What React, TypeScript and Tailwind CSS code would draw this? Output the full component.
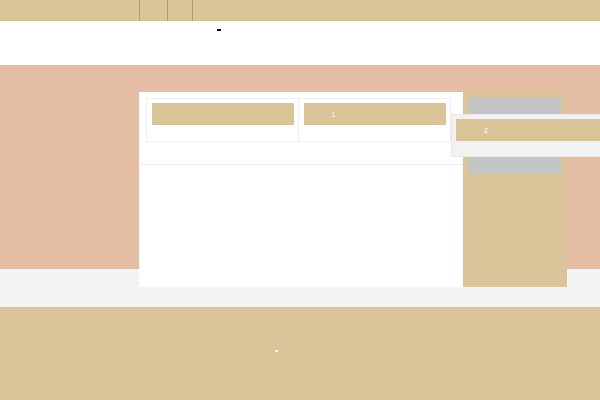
export default function App() {
  const tan = 'bg-[#dcc49a]';
  return (
    <div className="w-[600px] h-[400px] overflow-hidden bg-white font-['Liberation_Sans',sans-serif]">
      {/* top bar */}
      <div className={`h-[21px] ${tan} flex pl-[139px]`}>
        <div className="w-[28px] h-full border-l border-[#b39a70]" />
        <div className="w-[25px] h-full border-l border-[#b39a70]" />
        <div className="w-[1px] h-full border-l border-[#b39a70]" />
      </div>

      {/* white strip */}
      <div className="h-[44px] pl-[217px] pt-[8px]">
        <div className="w-[4px] h-[2px] bg-black" />
      </div>

      {/* main section */}
      <div className="h-[204px] bg-[#e5bca4] pt-[27px] pl-[139px]">
        <div className="relative z-10 flex">
          <div className="w-[324px] h-[195px] bg-white pt-[6px] pl-[7px]">
            <div className="w-[305px] grid grid-cols-2 border border-[#eeeeee] divide-x divide-[#eeeeee]">
              <div className="pl-[5px] pr-[4px] pt-[4px] pb-[16px]">
                <div className={`h-[22px] ${tan}`} />
              </div>
              <div className="pl-[5px] pr-[4px] pt-[4px] pb-[16px]">
                <div className={`h-[22px] ${tan} flex items-center pl-[28px] text-[7px] leading-none text-white`}>
                  1
                </div>
              </div>
            </div>
            <div className="-ml-[7px] mt-[22px] h-[1px] bg-[#f0f0f0]" />
          </div>

          <div className={`relative w-[104px] h-[195px] ${tan} px-[6px] pt-[5px]`}>
            <div className="h-[77px] bg-[#c4c4c4]" />
            <div className="absolute left-[-12px] top-[22px] w-[170px] h-[43px] bg-[#f2f2f2] border border-[#e8e8e8] pl-[4px] pt-[4px]">
              <div className={`w-[160px] h-[22px] ${tan} flex items-center pl-[28px] text-[7px] leading-none text-white`}>
                2
              </div>
            </div>
          </div>
        </div>
      </div>

      {/* gray band */}
      <div className="h-[38px] bg-[#f3f3f3]" />

      {/* footer */}
      <div className={`h-[93px] ${tan} pl-[275px] pt-[43px]`}>
        <div className="w-[3px] h-[2px] bg-[#fff6e0]" />
      </div>
    </div>
  );
}
